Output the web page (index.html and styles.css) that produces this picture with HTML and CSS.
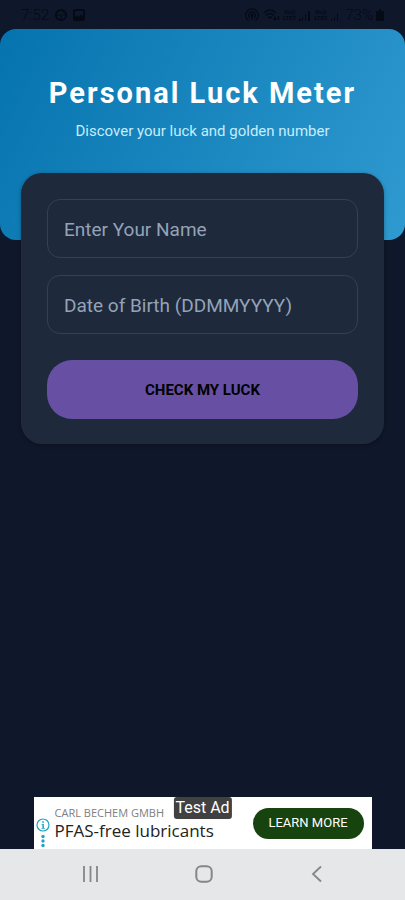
FILE: index.html
```html
<!DOCTYPE html>
<html lang="en">
<head>
<meta charset="utf-8">
<meta name="viewport" content="width=device-width, initial-scale=1">
<title>Personal Luck Meter</title>
<link rel="stylesheet" href="styles.css">
</head>
<body>
<div class="status">
  <div class="status-group">
    <span class="status-time">7:52</span>
    <svg width="14" height="14" viewBox="0 0 14 14" fill="none" stroke="currentColor" stroke-width="1.8"><circle cx="7" cy="7" r="5.200"/><path d="M1 7h12M5 3v2M9 3v2M7 8v4" stroke-width="1.2"/></svg>
    <svg width="12" height="12" viewBox="0 0 12 12"><path fill="currentColor" fill-rule="evenodd" d="M2 0h8a2 2 0 0 1 2 2v8a2 2 0 0 1-2 2H2a2 2 0 0 1-2-2V2a2 2 0 0 1 2-2zM2 2v6l2-2 2 2 2-3 2 2V2z"/></svg>
  </div>
  <div class="status-group status-right">
    <svg width="16" height="14" viewBox="0 0 16 14" fill="none" stroke="currentColor" stroke-width="1.2"><path d="M4.500 12.500a6.300 6.300 0 1 1 7 0M5.800 9.800a3.400 3.400 0 1 1 4.400 0"/><circle cx="8" cy="7" r="1" fill="currentColor"/><path d="M8 8v4"/></svg>
    <svg width="17" height="14" viewBox="0 0 17 14" fill="none" stroke="currentColor" stroke-width="1.200"><path d="M1 5q6-6 12 0M3 7.500q4-4 8 0M5 10q2-2 4 0M12 8v4m-1.500-1.500L12 12l1.500-1.500M15.500 12V8"/></svg>
    <span class="volte"><span>Vo))</span><span>LTE1</span></span>
    <svg width="12" height="12" viewBox="0 0 12 12" fill="currentColor"><path d="M0 10h2v2H0zM3 8h1v4H3zM6 5h1v7H6zM9 2h2v10H9z"/></svg>
    <span class="volte"><span>Vo))</span><span>LTE2</span></span>
    <svg width="12" height="12" viewBox="0 0 12 12" fill="currentColor"><path d="M1 10h1v2H1zM4 8h1v4H4zM7 4h1v8H7z"/></svg>
    <span class="battery">73%</span>
    <svg width="8" height="12" viewBox="0 0 8 12" fill="currentColor"><path d="M3 0h2v2h2a1 1 0 0 1 1 1v8a1 1 0 0 1-1 1H1a1 1 0 0 1-1-1V3a1 1 0 0 1 1-1h2z"/></svg>
  </div>
</div>
<header class="hero">
  <h1>Personal Luck Meter</h1>
  <p>Discover your luck and golden number</p>
</header>
<main class="content">
  <form class="card">
    <input class="field" type="text" aria-label="Enter Your Name" placeholder="Enter Your Name">
    <input class="field" type="text" inputmode="numeric" aria-label="Date of Birth (DDMMYYYY)" placeholder="Date of Birth (DDMMYYYY)">
    <button class="submit" type="button">CHECK MY LUCK</button>
  </form>
</main>
<aside class="ad">
  <span class="ad-badge">Test Ad</span>
  <svg class="ad-info" width="14" height="32" viewBox="0 0 14 32" fill="#20a3bf"><circle cx="7" cy="9" r="6" fill="none" stroke="#20a3bf" stroke-width="1.200"/><path d="M6.200 5.200h1.700v1.600H6.200zM5.600 8h2.300v4h1v.8H5.500V12h.9V8.800h-.8z"/><circle cx="7" cy="20.500" r="1.700"/><circle cx="7" cy="25" r="1.700"/><circle cx="7" cy="29.500" r="1.700"/></svg>
  <div class="ad-text">
    <span class="ad-brand">CARL BECHEM GMBH</span>
    <span class="ad-title">PFAS-free lubricants</span>
  </div>
  <a class="ad-link" href="#">LEARN MORE</a>
</aside>
<nav class="navbar" aria-label="System">
  <button type="button" aria-label="Recent apps"><svg width="18" height="18" viewBox="0 0 18 18" stroke="#858688" stroke-width="1.800"><path d="M2 1v16M8.500 1v16M15 1v16"/></svg></button>
  <button type="button" aria-label="Home"><svg width="18" height="18" viewBox="0 0 18 18" fill="none" stroke="#858688" stroke-width="2"><rect x="1.300" y="1.300" width="15.400" height="15.400" rx="5"/></svg></button>
  <button type="button" aria-label="Back"><svg width="18" height="18" viewBox="0 0 18 18" fill="none" stroke="#858688" stroke-width="1.800"><path d="M13 1.500L5 9l8 7.500"/></svg></button>
</nav>
</body>
</html>
```
FILE: styles.css
```css
* { box-sizing: border-box; }

body {
  margin: 0;
  min-height: 100vh;
  display: flex;
  flex-direction: column;
  background: #0f172a;
  font-family: Roboto, "Liberation Sans", sans-serif;
}

button, input { font-family: inherit; }

.status {
  height: 29px;
  padding: 0 21px;
  display: flex;
  align-items: center;
  justify-content: space-between;
  color: #050a16;
}

.status-group {
  display: flex;
  align-items: center;
  gap: 5px;
}

.status-right { gap: 3px; }

.status-time, .battery {
  font-size: 15px;
  font-weight: 300;
}

.volte {
  display: flex;
  flex-direction: column;
  align-items: center;
  font-size: 6px;
  line-height: 6px;
  font-weight: 700;
}

.hero {
  height: 211px;
  padding-top: 44px;
  border-radius: 16px;
  background: linear-gradient(117deg, #0573ae, #2f9ad0);
  text-align: center;
}

.hero h1 {
  margin: 0;
  font-size: 29px;
  line-height: 40px;
  font-weight: 700;
  letter-spacing: 2px;
  color: #fff;
}

.hero p {
  margin: 8px 0 0;
  font-size: 15px;
  line-height: 20px;
  color: #c4edfd;
}

.content {
  flex: 1;
  margin-top: -67px;
  padding: 0 21px;
}

.card {
  padding: 26px 26px 25px;
  border-radius: 21px;
  background: #1e293b;
  box-shadow: 0 1px 4px rgba(0, 0, 0, 0.3);
  display: flex;
  flex-direction: column;
}

.field {
  width: 100%;
  height: 59px;
  margin: 0 0 17px;
  padding: 2px 16px 0;
  border: 1px solid #334155;
  border-radius: 13px;
  background: transparent;
  color: #fff;
  font-size: 19px;
}

.field::placeholder { color: #94a3b8; opacity: 1; }

.submit {
  height: 59px;
  margin-top: 9px;
  border: 0;
  border-radius: 25px;
  background: #6750a4;
  color: #000;
  font-size: 15px;
  font-weight: 700;
}

.ad {
  position: relative;
  width: calc(100% - 67px);
  height: 52px;
  margin: 0 auto;
  padding: 0 8px 0 2px;
  display: flex;
  align-items: center;
  background: #fff;
}

.ad-info { margin: 17px 5px 0 0; flex: none; }

.ad-text {
  flex: 1;
  display: flex;
  flex-direction: column;
  font-family: "Open Sans", "Noto Sans", sans-serif;
  white-space: nowrap;
}

.ad-brand { font-size: 11px; line-height: 16px; color: #808080; }

.ad-title { font-size: 17px; line-height: 20px; color: #222; }

.ad-badge {
  position: absolute;
  top: 0;
  left: 50%;
  transform: translateX(-50%);
  padding: 0 2px;
  border-radius: 3px;
  background: #414141;
  color: #fff;
  font-size: 16px;
  line-height: 22px;
  white-space: nowrap;
}

.ad-link {
  width: 111px;
  height: 31px;
  border-radius: 16px;
  background: #17430e;
  color: #fff;
  font-size: 13px;
  line-height: 30px;
  text-align: center;
  text-decoration: none;
}

.navbar {
  height: 51px;
  padding: 0 32px 2px 34px;
  display: flex;
  background: #e6e7e9;
}

.navbar button {
  flex: 1;
  padding: 0;
  border: 0;
  background: none;
  display: flex;
  align-items: center;
  justify-content: center;
}
```
